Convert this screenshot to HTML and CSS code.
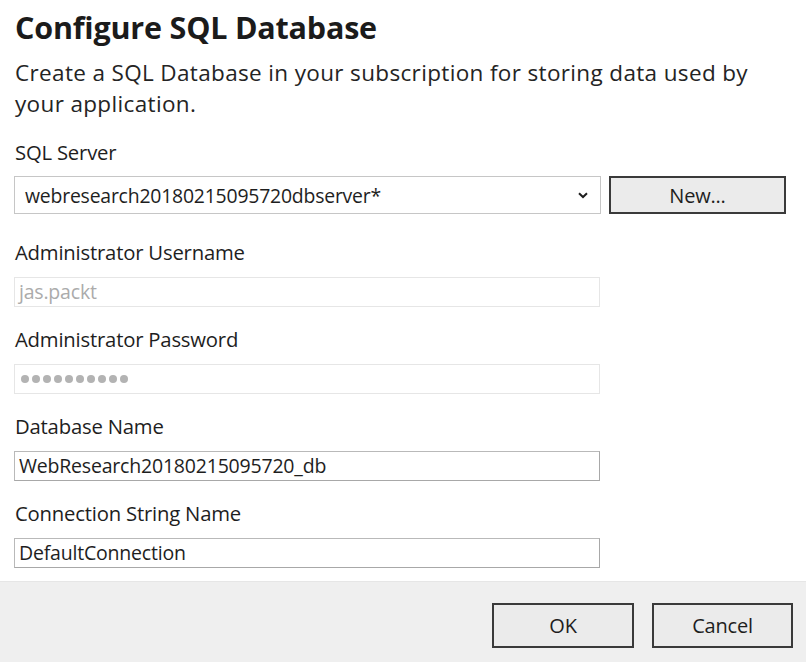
FILE: index.html
```html
<!DOCTYPE html>
<html lang="en">
<head>
<meta charset="utf-8">
<title>Configure SQL Database</title>
<link rel="stylesheet" href="styles.css">
</head>
<body>
<div class="dialog">
  <div class="content">
    <h1 class="title">Configure SQL Database</h1>
    <p class="desc">Create a SQL Database in your subscription for storing data used by<br>your application.</p>

    <div class="label label-first">SQL Server</div>
    <div class="server-row">
      <div class="select">
        <span class="select-text">webresearch20180215095720dbserver*</span>
        <svg class="chevron" width="10" height="7" viewBox="0 0 10 7"><path d="M1 1.2 L5 5 L9 1.2" fill="none" stroke="#1e1e1e" stroke-width="2"/></svg>
      </div>
      <button class="btn btn-new">New...</button>
    </div>

    <div class="label label-after-select">Administrator Username</div>
    <div class="field disabled">jas.packt</div>

    <div class="label">Administrator Password</div>
    <div class="field disabled dots"><span></span><span></span><span></span><span></span><span></span><span></span><span></span><span></span><span></span><span></span></div>

    <div class="label">Database Name</div>
    <div class="field">WebResearch20180215095720_db</div>

    <div class="label">Connection String Name</div>
    <div class="field">DefaultConnection</div>
  </div>
  <div class="footer">
    <button class="btn btn-ok">OK</button>
    <button class="btn btn-cancel">Cancel</button>
  </div>
</div>
</body>
</html>
```
FILE: styles.css
```css
html, body {
  margin: 0;
  padding: 0;
  background: #ffffff;
}
body {
  font-family: "Open Sans", "Noto Sans", "Liberation Sans", sans-serif;
  color: #1e1e1e;
  width: 806px;
  height: 662px;
  overflow: hidden;
}
.dialog {
  display: flex;
  flex-direction: column;
  height: 662px;
}
.content {
  padding: 8px 0 0 14px;
  height: 581px;
  box-sizing: border-box;
  flex: none;
}
.title {
  margin: 0 0 0 1px;
  font-size: 30.5px;
  line-height: 38px;
  font-weight: 700;
  color: #1b1b1b;
  letter-spacing: -0.2px;
}
.desc {
  margin: 12px 0 0 1px;
  font-size: 22.5px;
  line-height: 30.7px;
  color: #242424;
  letter-spacing: 0.35px;
}
.label {
  margin: 19px 0 0 1px;
  font-size: 20.3px;
  line-height: 26px;
  color: #1e1e1e;
  letter-spacing: -0.2px;
}
.label-first {
  margin-top: 20px;
}
.label-after-select {
  margin-top: 25px;
}
.server-row {
  display: flex;
  gap: 8px;
  margin-top: 11px;
}
.select {
  width: 587px;
  height: 38px;
  box-sizing: border-box;
  border: 1px solid #c6c6c6;
  background: #fff;
  display: flex;
  align-items: center;
  justify-content: space-between;
  padding: 0 12px 0 10px;
  font-size: 19.4px;
  color: #1e1e1e;
}
.select-text {
  letter-spacing: -0.2px;
}
.chevron {
  display: block;
}
.btn {
  font-family: "Open Sans", "Noto Sans", "Liberation Sans", sans-serif;
  font-size: 20px;
  color: #1e1e1e;
  background: #ebebeb;
  border: 2px solid #3a3a3a;
  box-sizing: border-box;
  padding: 0;
  margin: 0;
  letter-spacing: -0.2px;
}
.btn-new {
  width: 177px;
  height: 38px;
}
.field {
  margin-top: 12px;
  width: 586px;
  height: 30px;
  box-sizing: border-box;
  border: 1px solid #b9b9b9;
  border-right-color: #a8a8a8;
  border-bottom-color: #a8a8a8;
  padding: 0 4px;
  font-size: 19.5px;
  line-height: 28px;
  color: #1e1e1e;
  letter-spacing: -0.2px;
  background: #fff;
}
.field.disabled {
  border: 1px solid #e6e6e6;
  color: #ababab;
}
.dots {
  display: flex;
  align-items: center;
  gap: 3px;
  padding-left: 6px;
}
.dots span {
  width: 8px;
  height: 8px;
  border-radius: 50%;
  background: #b3b3b3;
}
.footer {
  flex: 1;
  background: #efefef;
  border-top: 1px solid #e6e6e6;
  display: flex;
  justify-content: flex-end;
  align-items: flex-start;
  gap: 18px;
  padding: 21px 13px 0 0;
}
.btn-ok {
  width: 142px;
  height: 45px;
}
.btn-cancel {
  width: 141px;
  height: 45px;
}
```
